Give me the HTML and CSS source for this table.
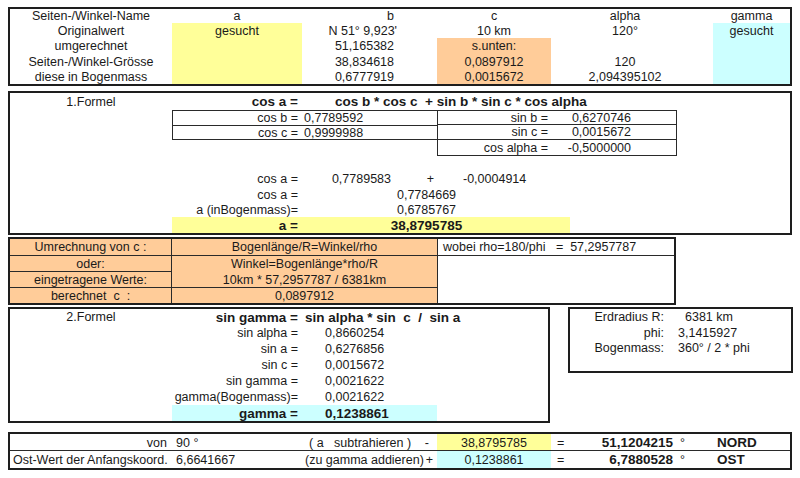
FILE: index.html
```html
<!DOCTYPE html>
<html>
<head>
<meta charset="utf-8">
<title>Kugeldreieck</title>
<link rel="stylesheet" href="styles.css">
</head>
<body>
<div class="sheet">

  <!-- Top table -->
  <div class="box top">
    <div class="yel tY"></div>
    <div class="ora tO"></div>
    <div class="cya tC"></div>

    <div class="x ac cA r1">Seiten-/Winkel-Name</div>
    <div class="x ac cB r1">a</div>
    <div class="x ar cC pb r1">b</div>
    <div class="x ac cD r1">c</div>
    <div class="x ac cE pe r1">alpha</div>
    <div class="x ac cH r1">gamma</div>

    <div class="x ac cA r2">Originalwert</div>
    <div class="x ac cB r2">gesucht</div>
    <div class="x ar cC pb2 r2">N 51° 9,923'</div>
    <div class="x ac cD r2">10 km</div>
    <div class="x ac cE pe r2">120°</div>
    <div class="x ac cH r2">gesucht</div>

    <div class="x ac cA r3">umgerechnet</div>
    <div class="x ar cC pb r3">51,165382</div>
    <div class="x ac cD r3">s.unten:</div>

    <div class="x ac cA r4">Seiten-/Winkel-Grösse</div>
    <div class="x ar cC pb r4">38,834618</div>
    <div class="x ac cD r4">0,0897912</div>
    <div class="x ac cE pe r4">120</div>

    <div class="x ac cA r5">diese in Bogenmass</div>
    <div class="x ar cC pb r5">0,6777919</div>
    <div class="x ac cD r5">0,0015672</div>
    <div class="x ac cE pe r5">2,094395102</div>
  </div>

  <!-- 1. Formel -->
  <div class="box f1">
    <div class="yel f1Y"></div>

    <div class="x ac cA r1">1.Formel</div>
    <div class="x ar cB lbl b r1">cos a =</div>
    <div class="x al formula b r1">cos b * cos c  + sin b * sin c * cos alpha</div>

    <div class="ibL">
      <div class="irow sep"><span class="lab">cos b =</span><span class="val">0,7789592</span></div>
      <div class="irow"><span class="lab">cos c =</span><span class="val">0,9999988</span></div>
    </div>

    <div class="ibR">
      <div class="irow sep"><span class="labR">sin b =</span><span class="valR">0,6270746</span></div>
      <div class="irow sep"><span class="labR">sin c =</span><span class="valR">0,0015672</span></div>
      <div class="irow"><span class="labR">cos alpha =</span><span class="valR">-0,5000000</span></div>
    </div>

    <div class="x ar cB lbl r6">cos a =</div>
    <div class="x ar cC pv r6">0,7789583</div>
    <div class="x ar cC pplus r6">+</div>
    <div class="x al cD pneg r6">-0,0004914</div>

    <div class="x ar cB lbl r7">cos a =</div>
    <div class="x ac cCD r7">0,7784669</div>

    <div class="x ar cB lbl r8">a (inBogenmass)=</div>
    <div class="x ac cCD r8">0,6785767</div>

    <div class="x ar cB lbl b r9">a =</div>
    <div class="x ac cCD b r9">38,8795785</div>
  </div>

  <!-- Umrechnung -->
  <div class="box um">
    <div class="x ac ora vr hb u1 r1">Umrechnung von c :</div>
    <div class="x ac ora vr hb u1 r2">oder:</div>
    <div class="x ac ora vr hb u1 r3">eingetragene Werte:</div>
    <div class="x ac ora vr u1 r4">berechnet  c  :</div>

    <div class="x ac ora hb u2 r1">Bogenlänge/R=Winkel/rho</div>
    <div class="x ac ora u2 r2">Winkel=Bogenlänge*rho/R</div>
    <div class="x ac ora hb u2 r3">10km * 57,2957787 / 6381km</div>
    <div class="x ac ora u2 r4">0,0897912</div>

    <div class="x al vl hb u3 pw r1">wobei rho=180/phi   =  57,2957787</div>
    <div class="vl u3 uRest"></div>
  </div>

  <!-- 2. Formel + Erdradius -->
  <div class="row4">
    <div class="box f2">
      <div class="cya f2C"></div>

      <div class="x ac cA r1">2.Formel</div>
      <div class="x ar cB lbl b r1">sin gamma =</div>
      <div class="x al f2form b r1">sin alpha * sin  c  /  sin a</div>

      <div class="x ar cB lbl r2">sin alpha =</div>
      <div class="x al cC pv2 r2">0,8660254</div>
      <div class="x ar cB lbl r3">sin a =</div>
      <div class="x al cC pv2 r3">0,6276856</div>
      <div class="x ar cB lbl r4">sin c =</div>
      <div class="x al cC pv2 r4">0,0015672</div>
      <div class="x ar cB lbl r5">sin gamma =</div>
      <div class="x al cC pv2 r5">0,0021622</div>
      <div class="x ar cB lbl r6">gamma(Bogenmass)=</div>
      <div class="x al cC pv2 r6">0,0021622</div>
      <div class="x ar cB lbl b r7">gamma =</div>
      <div class="x al cC pv2 b r7">0,1238861</div>
    </div>

    <div class="box erd">
      <div class="x ar e1 r1">Erdradius R:</div>
      <div class="x al e2 pk r1">6381 km</div>
      <div class="x ar e1 r2">phi:</div>
      <div class="x al e2 r2">3,1415927</div>
      <div class="x ar e1 r3">Bogenmass:</div>
      <div class="x al e2 r3">360° / 2 * phi</div>
    </div>
  </div>

  <!-- Result -->
  <div class="box bot">
    <div class="x ar cA pvon r1">von</div>
    <div class="x al cB p90 r1">90 °</div>
    <div class="x al cC psub r1">( a   subtrahieren )</div>
    <div class="x ar cC pminus r1">-</div>
    <div class="x ac cD yel r1">38,8795785</div>
    <div class="x al cEq peq r1">=</div>
    <div class="x ar cF pres b r1">51,1204215</div>
    <div class="x al cG pdeg r1">°</div>
    <div class="x al cH pdir b r1">NORD</div>

    <div class="x al cA post r2">Ost-Wert der Anfangskoord.</div>
    <div class="x al cB p90 r2">6,6641667</div>
    <div class="x al cC padd r2">(zu gamma addieren)</div>
    <div class="x ar cC pplus2 r2">+</div>
    <div class="x ac cD cya r2">0,1238861</div>
    <div class="x al cEq peq r2">=</div>
    <div class="x ar cF pres b r2">6,7880528</div>
    <div class="x al cG pdeg r2">°</div>
    <div class="x al cH pdir b r2">OST</div>

    <div class="hline"></div>
  </div>

</div>
</body>
</html>
```

FILE: styles.css
```css
* {
  box-sizing: border-box;
  margin: 0;
  padding: 0;
}

body {
  background: #ffffff;
  font-family: "Liberation Sans", Arial, sans-serif;
  font-size: 12.5px;
  color: #1a1a1a;
}

.sheet {
  width: 800px;
  padding: 7px 0 0 8px;
}

.box {
  border: 2px solid #1e1e1e;
  display: grid;
}

/* generic cell */
.x {
  display: flex;
  align-items: center;
  white-space: pre;
  min-width: 0;
}
.al { justify-content: flex-start; }
.ac { justify-content: center; }
.ar { justify-content: flex-end; }
.b { font-weight: bold; font-size: 13.5px; }

.yel { background: #ffff99; }
.ora { background: #ffcc99; }
.cya { background: #ccffff; }

/* columns */
.cA { grid-column: 1; }
.cB { grid-column: 2; }
.cC { grid-column: 3; }
.cD { grid-column: 4; }
.cE { grid-column: 5 / 8; }
.cEq { grid-column: 5; }
.cF { grid-column: 6; }
.cG { grid-column: 7; }
.cH { grid-column: 8; }
.cCD { grid-column: 3 / 5; }

/* rows */
.r1 { grid-row: 1; }
.r2 { grid-row: 2; }
.r3 { grid-row: 3; }
.r4 { grid-row: 4; }
.r5 { grid-row: 5; }
.r6 { grid-row: 6; }
.r7 { grid-row: 7; }
.r8 { grid-row: 8; }
.r9 { grid-row: 9; }

/* ---------- top table ---------- */
.top {
  width: 784px;
  grid-template-columns: 162px 130px 135px 114px 19px 107px 36px 77px;
  grid-template-rows: 14px 15px 16px 15px 15px;
}
.tY { grid-column: 2; grid-row: 2 / 6; }
.tO { grid-column: 4; grid-row: 3 / 6; }
.tC { grid-column: 8; grid-row: 2 / 6; }
.pb { padding-right: 43px; }
.pb2 { padding-right: 40px; }
.pe { padding-right: 14px; }

/* ---------- formula 1 ---------- */
.f1 {
  width: 784px;
  margin-top: 5px;
  grid-template-columns: 162px 130px 135px 114px 19px 107px 36px 77px;
  grid-template-rows: 17px 15px 15px 16px 15px 16px 15px 15px 16px;
}
.f1Y { grid-column: 2 / 6; grid-row: 9; }
.lbl { padding-right: 4px; }
.formula { grid-column: 3 / -1; padding-left: 33px; }

.ibL {
  grid-column: 2 / 4;
  grid-row: 2 / 4;
  border: 1px solid #2a2a2a;
  border-right: none;
  display: grid;
  grid-template-rows: 1fr 1fr;
}
.ibR {
  grid-column: 4 / 7;
  grid-row: 2 / 5;
  border: 1px solid #2a2a2a;
  display: grid;
  grid-template-rows: 14px 15px 1fr;
}
.irow {
  display: flex;
  align-items: center;
  white-space: pre;
}
.sep { border-bottom: 1px solid #2a2a2a; }
.lab {
  width: 129px;
  text-align: right;
  padding-right: 4px;
}
.val { padding-left: 2px; }
.labR {
  width: 113px;
  text-align: right;
  padding-right: 3px;
}
.valR {
  width: 80px;
  text-align: right;
}
.pv { padding-right: 46px; }
.pplus { padding-right: 3px; }
.pneg { padding-left: 26px; }

/* ---------- Umrechnung ---------- */
.um {
  width: 668px;
  margin-top: 2px;
  grid-template-columns: 162px 265px 237px;
  grid-template-rows: 17px 16px 16px 15px;
}
.u1 { grid-column: 1; }
.u2 { grid-column: 2; }
.u3 { grid-column: 3; }
.vr { border-right: 1px solid #2a2a2a; }
.vl { border-left: 1px solid #2a2a2a; }
.hb { border-bottom: 1px solid #2a2a2a; }
.pw { padding-left: 5px; }
.uRest { grid-row: 2 / 5; }

/* ---------- formula 2 + Erdradius ---------- */
.row4 {
  display: flex;
  align-items: flex-start;
  margin-top: 2px;
}
.f2 {
  width: 542px;
  grid-template-columns: 162px 130px 135px 111px;
  grid-template-rows: repeat(7, 16px);
}
.f2C { grid-column: 2 / 4; grid-row: 7; }
.f2form { grid-column: 3 / -1; padding-left: 3px; }
.pv2 { padding-left: 23px; }

.erd {
  width: 225px;
  height: 66px;
  margin-left: 18px;
  grid-template-columns: 94px 1fr;
  grid-template-rows: 16px 15px 15px;
}
.e1 { grid-column: 1; }
.e2 { grid-column: 2; padding-left: 14px; }
.e2.pk { padding-left: 21px; }

/* ---------- result ---------- */
.bot {
  width: 784px;
  margin-top: 9px;
  grid-template-columns: 162px 130px 135px 114px 19px 107px 36px 77px;
  grid-template-rows: 17px 17px;
}
.pvon { padding-right: 5px; }
.p90 { padding-left: 4px; }
.psub { padding-left: 7px; }
.pminus { padding-right: 8px; }
.padd { padding-left: 3px; }
.pplus2 { padding-right: 4px; }
.peq { padding-left: 6px; }
.pres { padding-right: 4px; }
.pdeg { padding-left: 3px; }
.pdir { padding-left: 4px; }
.post { padding-left: 3px; }
.hline {
  grid-column: 1 / -1;
  grid-row: 1;
  border-bottom: 1px solid #2a2a2a;
}
```
